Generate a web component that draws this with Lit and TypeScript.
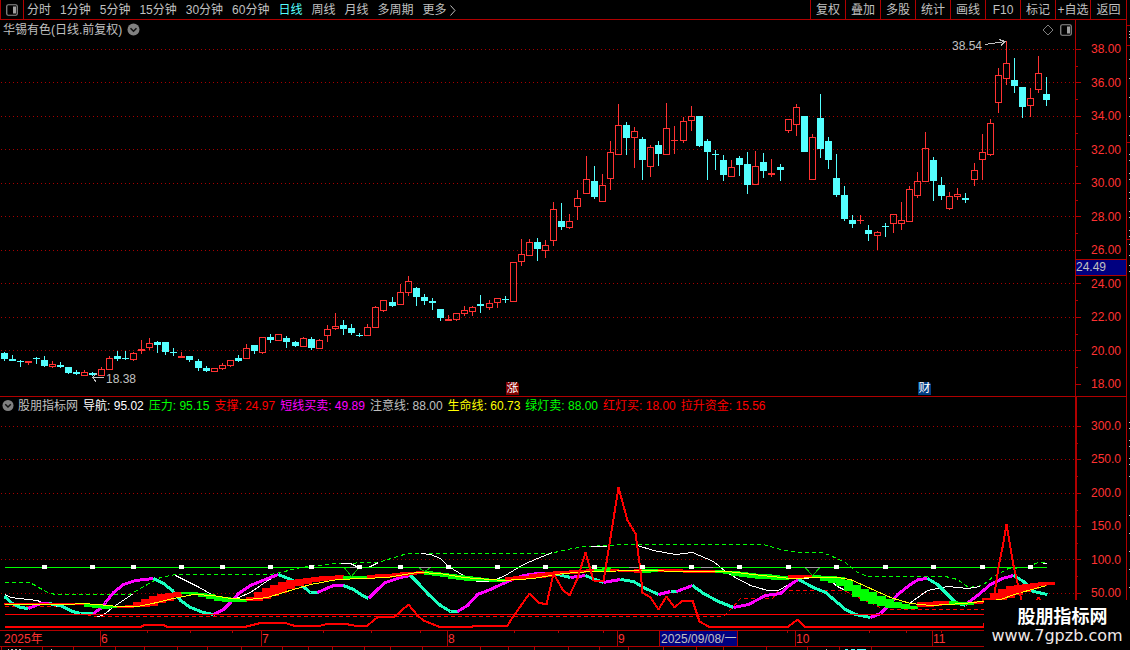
import { LitElement, html, svg, css } from "lit";
import { customElement, state } from "lit/decorators.js";
import { classMap } from "lit/directives/class-map.js";

type Pt = [number, number];
/* kind, high, body top, body bottom, low: vertical chart units */
type Candle = ["u" | "d", number, number, number, number];

const RAW = `d352,353,359,361 d355,359,361,361 d360,361,362,367 u361,361,363,365 d357,358,359,364 d356,360,366,367 u361,364,367,368 d362,365,367,368
d367,367,373,374 d370,372,374,375 u370,372,376,376 d372,373,375,376 u367,369,376,376 u356,358,370,370 d351,356,359,361 d351,358,359,360
u352,353,360,361 u340,349,351,354 u338,343,348,350 d341,342,345,353 d342,342,352,355 d348,352,353,356 u352,356,358,358 d356,356,360,362
d359,361,368,371 d366,368,371,372 u368,368,372,372 u363,365,369,370 u360,360,366,367 d355,358,361,362 u344,348,359,359 d345,345,351,354
u337,337,353,354 d334,337,340,343 u334,334,341,341 d336,338,342,348 d341,342,346,347 u337,338,347,347 d337,339,348,350 u339,340,349,349
u325,329,336,342 u313,326,329,330 d320,325,329,335 d324,328,333,335 d333,335,336,337 u324,327,336,336 u306,307,328,328 u300,300,311,312
d297,302,306,307 u284,292,305,305 u276,281,293,296 d287,288,297,306 d294,297,301,305 d298,301,303,310 d309,309,318,321 u315,319,321,321
u313,313,320,321 u306,310,314,316 u306,307,312,316 d295,304,306,313 u300,303,308,310 u298,298,303,308 w296,299,300,303 u262,262,302,302
u239,254,262,266 u239,242,256,256 d238,242,249,261 u240,245,251,258 u202,209,241,246 d203,221,227,230 u214,221,228,229 u190,198,207,220
u156,179,194,194 d166,181,197,199 u174,185,202,202 u141,152,179,190 u104,125,155,155 d122,125,138,155 u127,131,138,168 d137,139,160,180
u145,147,167,177 d141,145,154,166 u103,128,155,155 u126,140,141,154 u117,121,141,143 u106,116,121,131 d116,116,146,147 d139,141,152,180
d150,154,155,170 d155,160,175,181 u160,167,177,177 d156,158,165,176 d152,164,185,194 u151,166,185,185 d153,162,171,178 u159,173,175,177
d164,167,170,181 u119,119,131,133 u104,107,125,136 d116,116,152,152 u134,137,180,180 d94,118,149,158 d137,141,160,169 d154,178,195,197
d186,195,219,221 d215,220,224,228 u215,220,221,224 d225,230,234,241 u231,232,236,250 d223,226,227,237 u214,214,224,233 u202,220,224,230
u186,189,222,222 u172,181,196,198 u132,148,182,182 d157,160,181,201 d177,185,196,200 u192,196,209,210 u188,194,197,200 d193,198,200,203
u163,170,180,186 u134,152,160,180 u119,123,155,156 u68,75,103,113 u41,63,79,85 d58,80,86,93 d87,87,107,118 u88,98,106,117
u56,73,90,93 d77,94,100,106`;

const CANDLES: Candle[] = RAW.split(/\s+/).map((s) => {
  const [h, t, b, l] = s.slice(1).split(",").map(Number);
  return [s[0] === "u" ? "u" : "d", h, t, b, l];
});
const slotX = (i: number) => 4 + Math.floor(i * 8.084);

const poly = (s: string): Pt[] => s.trim().split(/\s+/).map((p) => p.split(",").map(Number) as Pt);

const RESISTANCE = "4,582 29,582 33,584 47,592 55,594 129,594 140,588 152,581 160,577 175,574 270,574 280,572 300,567 310,566 333,563 378,562 397,556 407,553 550,553 562,550 583,546 610,545 618,544 763,544 780,549 800,552 822,552 832,556 845,562 857,572 867,576 945,576 957,579 968,587 982,585 993,576 1008,568 1025,567 1038,562 1046,562";
const SUPPORT = "4,606 60,606 92,616 723,616 732,607 740,598 772,598 778,590 843,590 860,598 880,607 888,609 985,609";
const NAVIGATION = [
  "5,594 10,597 37,600 43,603 58,606",
  "97,616 102,615 115,605 133,593",
  "175,575 197,586 213,595 227,599 238,597 250,592 263,583 277,574",
  "340,563 350,563 358,567 368,567 378,562",
  "421,553 430,554 440,558 448,566 463,575 477,581 490,581 503,576 523,564 537,558 552,552",
  "590,546 606,546",
  "637,545 653,550 675,554 692,552 713,561 725,571 733,576 750,585 767,590 778,590 788,584 798,579 812,577 827,578 837,586 845,590",
  "902,608 913,600 927,590 947,586 967,588 980,586",
  "1042,563 1046,563",
];
const LIFE = "4,604 67,604 82,603 97,604 117,606 137,606 152,603 173,598 193,594 213,595 230,598 248,599 267,597 283,592 300,587 310,584 337,579 387,577 417,572 440,573 463,577 503,580 533,578 563,573 590,571 643,570 683,571 727,571 753,574 790,578 817,577 837,577 850,579 870,588 890,597 910,603 930,605 963,603 1000,599 1017,593 1046,585";
/* t = falling leg, m = rising leg */
const SWING: [string, string][] = [
  ["t", "4,596 12,603 20,607 28,608"], ["m", "28,608 40,603 48,603"], ["t", "48,603 60,605 72,611 80,613 93,613"],
  ["m", "93,613 100,608 105,602 113,592 123,584 135,580 153,578"], ["t", "153,578 163,583 172,590 180,600 190,607 203,612 213,614"],
  ["m", "213,614 223,609 230,602 238,593 250,585 267,578 278,574"], ["t", "278,574 290,579 300,584 310,592 317,592"],
  ["m", "317,592 333,585 343,585"], ["t", "343,585 353,589 362,595 368,598"], ["m", "368,598 377,589 385,582 400,577 410,575"],
  ["t", "410,575 418,583 428,594 440,605 450,611 457,611"], ["m", "457,611 467,605 477,594 490,589 507,581 523,575 537,573 553,573"],
  ["t", "553,573 570,577"], ["m", "570,577 585,575"], ["t", "585,575 592,578 603,582"], ["m", "603,582 608,581 620,579"],
  ["t", "620,579 633,581 643,587 658,594"], ["m", "658,594 670,591"], ["t", "670,591 676,591"], ["m", "676,591 692,585"],
  ["t", "692,585 703,593 718,601 733,607"], ["m", "733,607 748,604 765,595 780,593 790,584 798,579"],
  ["t", "798,579 813,587 825,592 838,603 845,609 855,614 870,617"], ["m", "870,617 880,613 888,605 897,594 910,584 918,579 927,578"],
  ["t", "927,578 937,584 947,594 955,602 965,605"], ["m", "965,604 977,595 990,584 1002,578 1013,575"],
  ["t", "1013,575 1023,581 1033,591 1047,594"],
];
const CAPITAL = "4,626 141,626 145,624 162,624 166,626 246,626 262,622 283,622 293,625 307,625 317,626 328,623 343,623 353,625 367,625 378,616 393,617 408,604 417,615 423,620 438,626 472,626 474,625 507,625 512,617 529,593 538,602 546,604 553,573 562,589 569,595 577,578 585,552 593,580 603,581 618,487 627,520 635,533 640,570 642,592 650,597 658,609 666,596 674,607 682,600 692,600 699,621 708,626 788,626 797,619 804,626 983,626 994,593 998,567 1002,547 1006,524 1013,565 1021,600 1030,610 1038,597 1046,610";
/* x, top, bottom */
const BAND = "4,603,604 80,603,604 84,604,606 97,605,608 117,606,607 125,605,607 133,602,606 141,599,606 150,596,605 157,594,602 165,593,600 173,592,596 181,592,593 190,592,594 206,594,598 222,597,601 238,599,601 248,596,600 254,592,600 262,588,598 270,585,595 278,582,592 290,579,586 300,578,583 320,576,580 340,575,578 345,576,578 360,576,578 368,575,577 378,574,577 400,572,575 420,571,573 435,572,575 450,574,578 465,576,580 480,578,580 497,579,581 505,577,580 520,576,578 535,573,577 555,571,574 575,570,572 590,569,571 605,568,570 620,570,571 640,569,572 650,569,571 712,570,572 728,571,574 745,573,577 760,574,578 780,576,579 790,575,578 800,575,577 812,575,577 828,576,582 840,577,587 850,584,595 860,589,600 870,593,604 880,597,606 890,601,607 900,604,608 908,606,608 917,602,606 933,601,605 945,601,604 965,602,604 975,601,603 983,598,602 991,592,600 999,588,599 1007,586,597 1015,585,594 1023,584,590 1031,583,588 1039,582,585 1047,582,584 1056,581,583"
  .split(" ").map((p) => p.split(",").map(Number));
const BAND_TURNS: [number, string][] = [[0, "r"], [82, "g"], [117, "r"], [179, "g"], [240, "r"], [343, "g"], [362, "r"], [419, "g"], [501, "r"], [592, "g"], [605, "r"], [640, "g"], [652, "r"], [711, "g"], [785, "r"], [808, "g"], [910, "r"], [942, "g"], [966, "r"]];
const MARKS = [5, 11, 16, 22, 27, 33, 38, 44, 49, 55, 61, 67, 73, 79, 85, 91, 97, 103, 109, 115, 121, 127];

function bandAt(x: number): { top: number; bottom: number; tone: string } {
  let k = 0;
  while (k < BAND.length - 2 && BAND[k + 1][0] < x) k++;
  const [a, b] = [BAND[k], BAND[k + 1]];
  const f = (x - a[0]) / (b[0] - a[0]);
  let tone = "r";
  for (const [start, t] of BAND_TURNS) if (x >= start) tone = t;
  return { top: Math.round(a[1] + (b[1] - a[1]) * f), bottom: Math.round(a[2] + (b[2] - a[2]) * f) + 1, tone };
}

const PRICE_ROWS = [49, 82, 116, 149, 183, 216, 250, 283, 317, 350, 384];
const PRICES = ["38.00", "36.00", "34.00", "32.00", "30.00", "28.00", "26.00", "24.00", "22.00", "20.00", "18.00"];
const LEVEL_ROWS = [426, 459, 493, 526, 559, 593];
const LEVELS = ["300.0", "250.0", "200.0", "150.0", "100.0", "50.00"];

const PERIODS = ["分时", "1分钟", "5分钟", "15分钟", "30分钟", "60分钟", "日线", "周线", "月线", "多周期"];
const ACTIONS = ["复权", "叠加", "多股", "统计", "画线", "F10", "标记", "+自选", "返回"];
const READINGS: [string, string, string][] = [
  ["导航", "95.02", "white"], ["压力", "95.15", "green"], ["支撑", "24.97", "red"], ["短线买卖", "49.89", "magenta"],
  ["注意线", "88.00", "gray"], ["生命线", "60.73", "yellow"], ["绿灯卖", "88.00", "green"], ["红灯买", "18.00", "red"], ["拉升资金", "15.56", "red"],
];
const MONTHS: [number, string][] = [[100, "6"], [261, "7"], [447, "8"], [617, "9"], [795, "10"], [932, "11"]];
const WEEK_TICKS = [140, 181, 221, 308, 354, 401, 490, 532, 575, 751, 829, 864, 898];
const LOWER_TICKS = [1, 42, 73, 115, 144, 177, 207, 241, 282, 308, 332, 364, 390, 422, 480, 508, 534, 568, 599, 628, 663, 696, 723, 766, 807, 839, 871];

const chevron = html`<svg class="chevron" viewBox="0 0 13 13" aria-hidden="true">
  <circle cx="6.5" cy="6.5" r="6" fill="#808080" /><path d="M3.5 5.2 6.5 8.2 9.5 5.2" fill="none" stroke="#111" stroke-width="1.6" /></svg>`;
const paneIcon = html`<svg class="pane-icon" viewBox="0 0 12 12" aria-hidden="true">
  <rect x=".75" y=".75" width="10.5" height="10.5" rx="1.5" fill="none" stroke="#909090" stroke-width="1.2" />
  <rect x="7" y="2.5" width="3" height="7" fill="#a0a0a0" /></svg>`;

@customElement("app-root")
export class AppRoot extends LitElement {
  @state() private period = "日线";

  static styles = css`
    :host {
      display: grid;
      grid-template-columns: minmax(0, 1fr) 52px 3px;
      grid-template-rows: 20px minmax(0, 376fr) minmax(0, 234fr) 20px;
      min-height: 100vh;
      position: relative;
      background: #000;
      color: #c0c0c0;
      font: 12px/15px "Liberation Sans", "Noto Sans CJK SC", sans-serif;
      overflow: hidden;
    }
    * { box-sizing: border-box; }
    svg { display: block; }
    button { font: inherit; color: inherit; background: none; border: 0; padding: 0; margin: 0; cursor: pointer; white-space: nowrap; }
    .toolbar {
      grid-column: 1 / 3;
      display: flex;
      justify-content: space-between;
      border-bottom: 1px solid #b00000;
      border-right: 1px solid #b00000;
      overflow: hidden;
    }
    .periods, .actions { display: flex; align-items: stretch; }
    .periods { gap: 9px; }
    .periods button, .actions button { padding-top: 2px; }
    .periods .layout-button { width: 24px; margin-right: -6px; padding: 0; border: solid #b00000; border-width: 0 1px; display: grid; place-items: center; }
    .pane-icon { width: 12px; height: 12px; }
    .periods .active { color: #54ffff; }
    .more { display: flex; align-items: center; gap: 3px; }
    .more svg { width: 6px; height: 11px; }
    .actions button { width: 35px; border-left: 1px solid #b00000; text-align: center; }
    .actions button:last-child { width: 36px; }
    .panel { display: grid; grid-template: minmax(0, 1fr) / minmax(0, 1fr); position: relative; }
    .panel > * { grid-area: 1 / 1; }
    .plot { width: 100%; height: 100%; shape-rendering: crispEdges; }
    .indicator, .levels { border-top: 1px solid #b00000; }
    .head { display: flex; justify-content: space-between; align-items: center; height: 19px; align-self: start; padding: 0 3px; }
    .title { display: flex; align-items: center; gap: 5px; white-space: nowrap; }
    .title span { padding-top: 1px; }
    .chevron { width: 13px; height: 13px; }
    .head-icons { display: flex; align-items: center; gap: 6px; }
    .diamond { width: 12px; height: 12px; }
    .readings { display: flex; gap: 5px; align-items: center; height: 17px; align-self: start; padding: 0 2px; white-space: nowrap; }
    .readings span { padding-top: 1px; }
    .readings .chevron { width: 12px; margin-right: -1px; }
    .white { color: #fff; }
    .green { color: #0f0; }
    .red { color: #f00; }
    .magenta { color: #f0f; }
    .yellow { color: #ff0; }
    .gray { color: #c0c0c0; }
    .tag { position: absolute; transform: translateY(-50%); }
    .badge { position: absolute; bottom: 1px; width: 13px; height: 13px; line-height: 13px; color: #fff; text-align: center; clip-path: polygon(0 0, 11px 0, 100% 2px, 100% 100%, 0 100%); }
    .badge.rise { background: #800000; }
    .badge.report { background: #003c80; }
    .scale { display: grid; grid-template: minmax(0, 1fr) / minmax(0, 1fr); position: relative; border-right: 1px solid #b00000; color: #ff3232; }
    .scale > svg, .scale > .labels { grid-area: 1 / 1; }
    .labels { display: flex; flex-direction: column; justify-content: space-between; text-align: right; padding: 22px 5px 4px 0; }
    .levels .labels { padding-bottom: 29px; }
    .cursor-price { position: absolute; left: 1px; right: 0; height: 17px; background: #000080; color: #c0c0c0; border: solid #b00000; border-width: 1px 0; }
    .timeline { grid-column: 1 / 3; position: relative; color: #ff3232; display: grid; grid-template-rows: 17px 3px; }
    .months { border: solid #b00000; border-width: 1px 0; position: relative; line-height: 17px; padding-left: 4px; }
    .month { position: absolute; top: 0; height: 15px; border-left: 1px solid #b00000; }
    .cursor-date { position: absolute; top: 0; height: 15px; width: 79px; overflow: hidden; white-space: nowrap; background: #000080; color: #c0c0c0; border: solid #b00000; border-width: 0 1px; padding-left: 1px; }
    .ticks { position: absolute; inset: 0 52px 0 0; }
    .timeline .ticks { right: 51px; }
    .strip { grid-area: 1 / 3 / -1 / 4; width: 3px; height: 100%; }
    .watermark { position: absolute; right: 0; bottom: 0; width: 146px; height: 50px; background: #000; color: #fff; text-align: center; display: grid; grid-template-rows: 24px 18px; padding: 3px 0 5px; }
    .site { font: bold 18px/24px "Noto Sans CJK SC", sans-serif; padding-left: 11px; }
    .url { font: 16px/18px "DejaVu Sans", sans-serif; color: #f0e8e8; text-decoration: none; white-space: nowrap; }
  `;

  private grid(rows: number[]) {
    return rows.map((y) => svg`<line x1="1" x2="1075" y1=${y + 0.5} y2=${y + 0.5} stroke="#a80000" stroke-dasharray="1 3" />`);
  }

  private candle([kind, high, top, bottom, low]: Candle, i: number) {
    const x = slotX(i);
    const color = i === 62 ? "#54ffff" : kind === "u" ? "#ff3232" : "#54ffff";
    const hollow = kind === "u" && bottom - top > 2;
    return svg`<rect x=${x} y=${high} width="1" height=${Math.max(1, (hollow ? top : low) - high)} fill=${color} />
      ${hollow
        ? svg`<rect x=${x} y=${bottom} width="1" height=${Math.max(0, low - bottom)} fill=${color} />
            <rect x=${x - 2.5} y=${top + 0.5} width="6" height=${bottom - top - 1} fill="none" stroke=${color} />`
        : svg`<rect x=${x - 3} y=${top} width="7" height=${bottom - top} fill=${color} />`}`;
  }

  private curve(points: string, color: string, width = 1, dash = "") {
    const d = poly(points).map(([x, y]) => `${x + 0.5},${y + 0.5}`).join(" ");
    return svg`<polyline points=${d} fill="none" stroke=${color} stroke-width=${width} stroke-dasharray=${dash || "none"} stroke-linejoin="bevel" />`;
  }

  private band() {
    return Array.from({ length: 130 }, (_, i) => {
      const x = slotX(i);
      const { top, bottom, tone } = bandAt(x);
      return svg`<rect x=${Math.max(4, x)} y=${top} width="9" height=${bottom - top} fill=${tone === "r" ? "#ff0000" : "#00ff00"} />`;
    });
  }

  private scaleTicks(rows: number[], from: number, height: number, heavy: boolean) {
    const half = rows.slice(1).map((y, i) => Math.round((y + rows[i]) / 2));
    return html`<svg class="plot" viewBox="0 ${from} 51 ${height}" preserveAspectRatio="none" aria-hidden="true">
      <rect x="0" y=${from} width=${heavy ? 2 : 1} height=${height} fill="#b00000" />
      ${rows.map((y) => svg`<rect x="0" y=${y} width="6" height="1" fill="#b00000" />`)}
      ${half.map((y) => svg`<rect x="0" y=${y} width="3" height="1" fill="#b00000" />`)}
    </svg>`;
  }

  private toolbar() {
    return html`<header class="toolbar">
      <nav class="periods" aria-label="周期">
        <button class="layout-button" aria-label="布局">${paneIcon}</button>
        ${PERIODS.map((p) => html`<button class=${classMap({ active: p === this.period })} @click=${() => (this.period = p)}>${p}</button>`)}
        <button class="more">更多<svg viewBox="0 0 6 11" aria-hidden="true"><path d="M.5 .5 5 5.5 .5 10.5" fill="none" stroke="#c0c0c0" /></svg></button>
      </nav>
      <div class="actions">${ACTIONS.map((a) => html`<button>${a}</button>`)}</div>
    </header>`;
  }

  private pricePanel() {
    const at = (x: number, y: number) => `left:${(x / 1075) * 100}%;top:${((y - 20) / 376) * 100}%`;
    return html`<section class="panel">
        <svg class="plot" viewBox="0 20 1075 376" preserveAspectRatio="none" role="img" aria-label="日线">
          ${this.grid(PRICE_ROWS.slice(0, -1))}
          ${CANDLES.map((c, i) => this.candle(c, i))}
          <path d="M985 44.5 992 43.5 1005 41.5M999 39.5 1005 41.5 1001 45.5M104 377.5H92.5M97 373.5 92.5 377.5 96 381.5" fill="none" stroke="#c0c0c0" />
        </svg>
        <div class="head">
          <div class="title"><span>华锡有色(日线.前复权)</span><button aria-label="展开">${chevron}</button></div>
          <div class="head-icons">
            <svg class="diamond" viewBox="0 0 12 12" aria-hidden="true"><path d="M6 1 11 6 6 11 1 6Z" fill="none" stroke="#808080" /></svg>
            <button aria-label="侧栏">${paneIcon}</button>
          </div>
        </div>
        <span class="tag" style=${at(952, 45.5)}>38.54</span>
        <span class="tag" style=${at(106, 378.5)}>18.38</span>
        <span class="badge rise" style="left:${(506 / 1075) * 100}%">涨</span>
        <span class="badge report" style="left:${(918 / 1075) * 100}%">财</span>
      </section>
      <aside class="scale">
        ${this.scaleTicks(PRICE_ROWS, 20, 376, false)}
        <div class="labels">${PRICES.map((p) => html`<span>${p}</span>`)}</div>
        <span class="cursor-price" style="top:${(239 / 376) * 100}%">24.49</span>
      </aside>`;
  }

  private indicatorPanel() {
    return html`<section class="panel indicator">
        <svg class="plot" viewBox="0 397 1075 233" preserveAspectRatio="none" role="img" aria-label="股朋指标网">
          ${this.grid(LEVEL_ROWS)}
          ${this.curve(SUPPORT, "#ff0000", 1, "4 3")}
          ${this.curve(RESISTANCE, "#00ff00", 1, "4 3")}
          ${NAVIGATION.map((s) => this.curve(s, "#ffffff"))}
          ${SWING.map(([tone, s]) => this.curve(s, tone === "t" ? "#18ffc0" : "#ff00ff", 3))}
          ${this.band()}
          ${this.curve("4,614 1046,614", "#ff0000")}
          ${this.curve("4,567 1046,567", "#00ff00")}
          <path d="M344.5 568 351.5 576.5 358.5 568M419 568 424.5 571.5 430 568M805.5 568 812.5 575.5 819.5 568" fill="none" stroke="#00c000" />
          <path d="M350 567.5H358M419 567.5H431M629 567.5H638M701 567.5H713M805 567.5H820" fill="none" stroke="#a0a0a0" />
          ${this.curve(LIFE, "#ffff00")}
          ${this.curve(CAPITAL, "#ff0000", 2)}
          ${MARKS.map((i) => svg`<rect x=${slotX(i) - 2} y="565" width="5" height="4" fill="#ffffff" />`)}
        </svg>
        <div class="readings">
          <button aria-label="展开">${chevron}</button>
          <span>股朋指标网</span>
          ${READINGS.map(([name, value, tone]) => html`<span class=${tone}>${name}: ${value}</span>`)}
        </div>
      </section>
      <aside class="scale levels">
        ${this.scaleTicks(LEVEL_ROWS, 397, 233, true)}
        <div class="labels">${LEVELS.map((p) => html`<span>${p}</span>`)}</div>
      </aside>`;
  }

  private timeline() {
    return html`<footer class="timeline">
      <div class="months">2025年
        ${MONTHS.map(([x, m]) => html`<span class="month" style="left:${(x / 1127) * 100}%">${m}</span>`)}
        <span class="cursor-date" style="left:${(659 / 1127) * 100}%">2025/09/08/一</span>
      </div>
      <svg class="plot" viewBox="0 647 1127 3" preserveAspectRatio="none" aria-hidden="true">
        ${LOWER_TICKS.map((x) => svg`<rect x=${x} y="647" width="1" height="3" fill="#b00000" />`)}
        <path d="M8 649.5H9M11 649.5H13M15 649.5H17M19 649.5H21M51 649.5H52M826 649.5H827" stroke="#c0c0c0" />
        <path d="M845 649.5H848M851 649.5H855M857 649.5H866" stroke="#54ffff" />
      </svg>
      <svg class="plot ticks" viewBox="0 630 1075 20" preserveAspectRatio="none" aria-hidden="true">
        ${WEEK_TICKS.map((x) => svg`<rect x=${x} y="630" width="1" height="3" fill="#b00000" />`)}
      </svg>
    </footer>`;
  }

  render() {
    return html`${this.toolbar()}${this.pricePanel()}${this.indicatorPanel()}${this.timeline()}
      <svg class="strip" viewBox="0 0 3 650" preserveAspectRatio="none" aria-hidden="true">
        ${[25, 45, 142, 239].map((y) => svg`<rect x="0" y=${y} width="3" height="1" fill="#b00000" />`)}
        ${[31, 34, 37, 59, 78, 97, 116, 135, 154, 160, 173, 179, 192, 198, 211, 217, 230, 236, 244, 255, 265, 271, 422, 428, 440, 446, 458, 464, 476, 515, 533, 551, 569, 587].map((y) => svg`<rect x="2" y=${y} width="1" height="1" fill="#c0c0c0" />`)}
      </svg>
      <div class="watermark"><span class="site">股朋指标网</span><a class="url" href="#">www.7gpzb.com</a></div>`;
  }
}
